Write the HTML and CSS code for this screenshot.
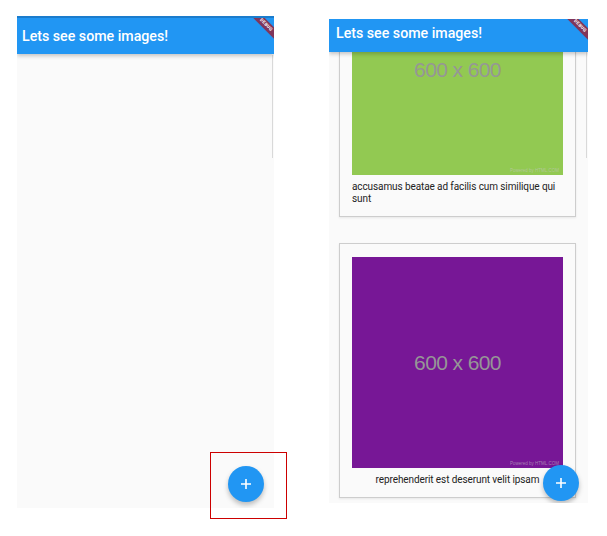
FILE: index.html
```html
<!DOCTYPE html>
<html>
<head>
<meta charset="utf-8">
<link rel="stylesheet" href="styles.css">
</head>
<body>
<div class="stage">
  <div class="phone phone-left">
    <header class="appbar appbar-left">
      <h1 class="title">Lets see some images!</h1>
      <div class="banner-clip"><div class="banner">DEBUG</div></div>
    </header>
    <div class="body"></div>
    <div class="edge-line edge-left"></div>
    <button class="fab fab-left" aria-label="Add">
      <svg width="12" height="12" viewBox="0 0 12 12"><path d="M6 1v10M1 6h10" stroke="#fff" stroke-width="1.6" fill="none"/></svg>
    </button>
  </div>

  <div class="phone phone-right">
    <header class="appbar appbar-right">
      <h1 class="title">Lets see some images!</h1>
      <div class="banner-clip"><div class="banner">DEBUG</div></div>
    </header>
    <div class="body scroll">
      <div class="list">
        <div class="card">
          <div class="thumb thumb-green">
            <span class="thumb-label">600 x 600</span>
            <span class="powered">Powered by HTML.COM</span>
          </div>
          <p class="caption">accusamus beatae ad facilis cum similique qui sunt</p>
        </div>
        <div class="card">
          <div class="thumb thumb-purple">
            <span class="thumb-label">600 x 600</span>
            <span class="powered">Powered by HTML.COM</span>
          </div>
          <p class="caption">reprehenderit est deserunt velit ipsam</p>
        </div>
      </div>
    </div>
    <div class="edge-line edge-right"></div>
    <button class="fab fab-right" aria-label="Add">
      <svg width="12" height="12" viewBox="0 0 12 12"><path d="M6 1v10M1 6h10" stroke="#fff" stroke-width="1.6" fill="none"/></svg>
    </button>
  </div>

  <div class="highlight"></div>
</div>
</body>
</html>
```

FILE: styles.css
```css
* { box-sizing: border-box; }
html, body { margin: 0; padding: 0; background: #ffffff; }
body { font-family: Roboto, "Noto Sans", sans-serif; }

.stage {
  position: relative;
  width: 607px;
  height: 536px;
  display: flex;
  align-items: flex-start;
  gap: 55px;
  padding-left: 17px;
}

.phone {
  position: relative;
  background: #fafafa;
  display: flex;
  flex-direction: column;
  overflow: hidden;
}
.phone-left { margin-top: 16px; width: 257px; height: 492px; }
.phone-right { margin-top: 19px; width: 259px; height: 484px; }

.appbar {
  position: relative;
  z-index: 2;
  flex: none;
  background: #2196f3;
  display: flex;
  align-items: center;
  box-shadow: 0 2px 4px rgba(0,0,0,0.22);
}
.appbar-left { height: 38px; border-top: 2px solid #1b7ccc; padding-left: 5px; }
.appbar-right { height: 33px; padding-left: 7px; padding-bottom: 5px; }

.title {
  margin: 0;
  color: #ffffff;
  font-size: 14.2px;
  font-weight: 500;
  line-height: 18px;
}

.banner-clip {
  position: absolute;
  top: 0;
  right: 0;
  width: 30px;
  height: 30px;
  overflow: hidden;
}
.banner {
  position: absolute;
  left: 2px;
  top: 3px;
  width: 40px;
  height: 8px;
  background: rgba(160, 22, 40, 0.75);
  color: #fff;
  font-size: 4.5px;
  font-weight: 700;
  line-height: 8px;
  text-align: center;
  letter-spacing: 0.3px;
  transform: rotate(45deg);
}

.body { flex: 1; position: relative; }
.scroll { overflow: hidden; }

.list {
  margin-top: -102px;
  padding: 0 12px 0 10px;
  display: flex;
  flex-direction: column;
  gap: 26px;
}

.card {
  background: #fafafa;
  border: 1px solid #cdcdcd;
  box-shadow: 0 1px 2px rgba(0,0,0,0.08);
  padding: 13px 12px 11px 12px;
  display: flex;
  flex-direction: column;
  align-items: center;
}

.thumb {
  position: relative;
  width: 211px;
  height: 211px;
  flex: none;
  display: flex;
  align-items: center;
  justify-content: center;
}
.thumb-green { background: #92c952; }
.thumb-purple { background: #771796; }

.thumb-label {
  font-family: "Liberation Sans", Arial, sans-serif;
  font-size: 21px;
  letter-spacing: -0.6px;
  color: #969696;
}
.powered {
  position: absolute;
  right: 4px;
  bottom: 2px;
  font-family: "Liberation Sans", Arial, sans-serif;
  font-size: 4.5px;
  color: rgba(200,200,200,0.6);
}

.caption {
  margin: 6px 0 0 0;
  font-size: 10px;
  letter-spacing: -0.1px;
  line-height: 12px;
  color: #222;
  text-align: left;
}

.edge-line {
  position: absolute;
  width: 1px;
  background: #d9d9d9;
}
.edge-left { left: 255px; top: 39px; height: 103px; }
.edge-right { right: 1px; top: 33px; height: 106px; }

.fab {
  position: absolute;
  z-index: 3;
  width: 36px;
  height: 36px;
  border: none;
  border-radius: 50%;
  padding: 0;
  background: #2196f3;
  display: flex;
  align-items: center;
  justify-content: center;
  box-shadow: 0 3px 5px rgba(0,0,0,0.25);
}
.fab-left { right: 10px; bottom: 6px; }
.fab-right { right: 9px; bottom: 2px; }

.highlight {
  position: absolute;
  left: 210px;
  top: 452px;
  width: 77px;
  height: 67px;
  border: 1px solid #cc0000;
}
```
